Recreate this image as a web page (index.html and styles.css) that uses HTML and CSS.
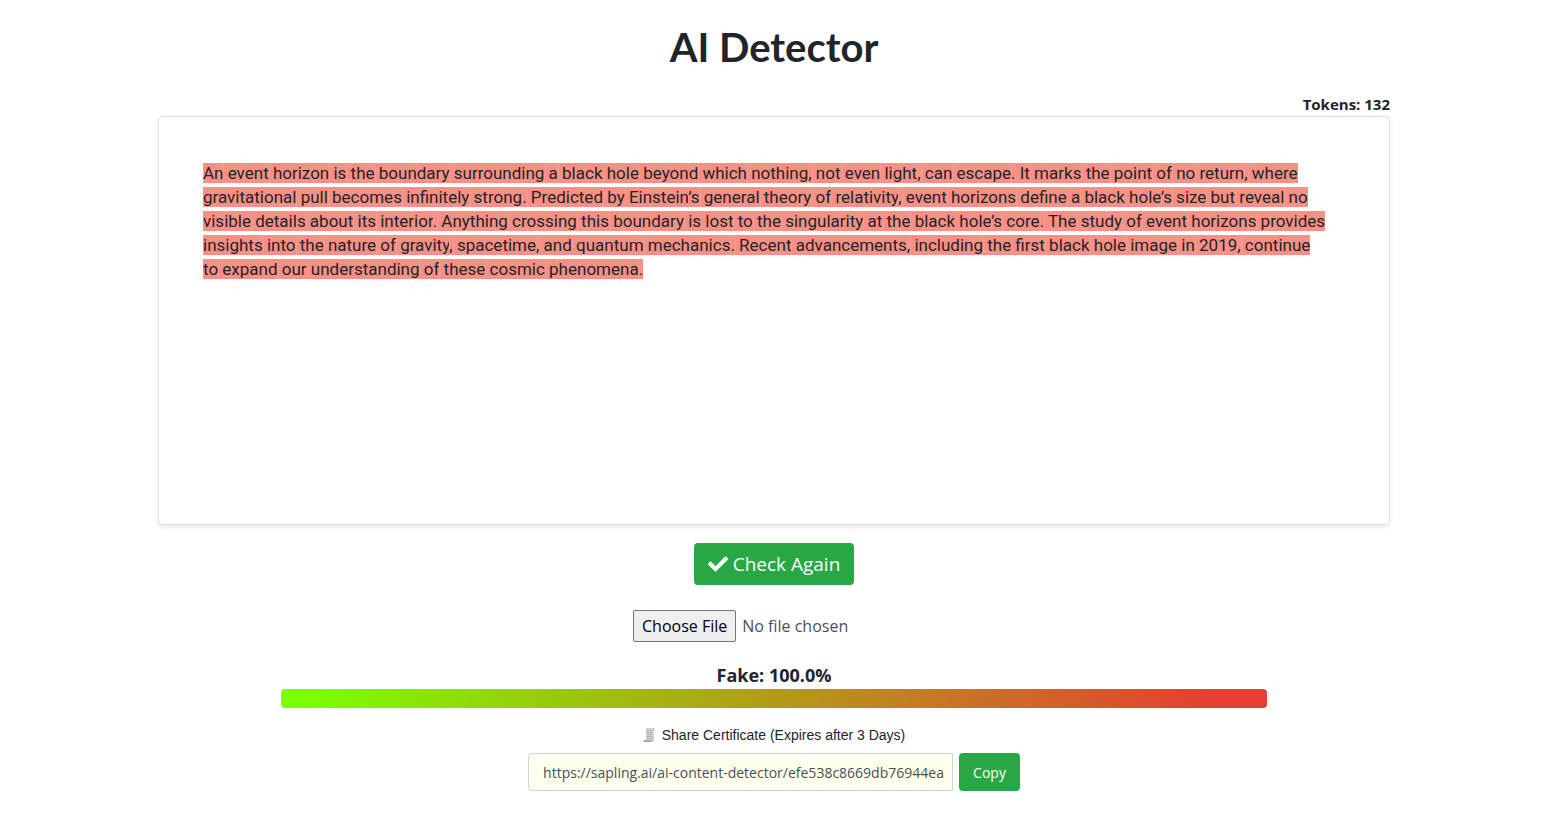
FILE: index.html
```html
<!DOCTYPE html>
<html lang="en">
<head>
    <meta charset="UTF-8">
    <meta name="viewport" content="width=device-width, initial-scale=1.0">
    <title>AI Detector</title>
    <link rel="stylesheet" href="styles.css">
</head>
<body>

<main class="container">
    <h1>AI Detector</h1>

    <div class="tokens">Tokens: 132</div>
    <div class="editor" id="editor">An event horizon is the boundary surrounding a black hole beyond which nothing, not even light, can escape. It marks the point of no return, where gravitational pull becomes infinitely strong. Predicted by Einstein’s general theory of relativity, event horizons define a black hole’s size but reveal no visible details about its interior. Anything crossing this boundary is lost to the singularity at the black hole’s core. The study of event horizons provides insights into the nature of gravity, spacetime, and quantum mechanics. Recent advancements, including the first black hole image in 2019, continue to expand our understanding of these cosmic phenomena.</div>

    <button type="button" class="btn btn-check">
        <svg class="icon-check" viewBox="0 0 512 512" aria-hidden="true"><path fill="currentColor" d="M173.898 439.404l-166.4-166.4c-9.997-9.997-9.997-26.206 0-36.204l36.203-36.204c9.997-9.998 26.207-9.998 36.204 0L192 312.69 432.095 72.596c9.997-9.997 26.207-9.997 36.204 0l36.203 36.204c9.997 9.997 9.997 26.206 0 36.204l-294.4 294.401c-9.998 9.997-26.207 9.997-36.204-.001z"/></svg>
        Check Again
    </button>

    <input type="file" class="file-input" aria-label="Upload a file">

    <div class="score">Fake: 100.0%</div>
    <div class="score-bar"></div>

    <label class="share-label" for="share-url">
        <svg class="icon-receipt" viewBox="0 0 12 14" aria-hidden="true">
            <path fill="#d0d2d4" d="M3 0h9v1l-1 1v11l-1 1H2l1-2z"/>
            <path fill="#b3a5a5" d="M0 12h8l1 2H1z"/>
            <path stroke="#a4a8ab" stroke-dasharray="2 1" d="M4 2.500h5M4 4.500h5M4 6.500h5M4 8.500h5M4 10.500h5"/>
        </svg>
        Share Certificate (Expires after 3 Days)
    </label>
    <div class="share-row">
        <input type="text" class="share-url" id="share-url" value="https://sapling.ai/ai-content-detector/efe538c8669db76944ea" readonly>
        <button type="button" class="btn btn-copy" onclick="copyUrl()">Copy</button>
    </div>
</main>

<script>
    // Wrap every token so it can be highlighted on its own
    function highlightTokens() {
        const editor = document.getElementById('editor');
        const tokens = editor.textContent.match(/\s?[^\s,.’]+|[,.]|’s/g);

        editor.textContent = '';
        tokens.forEach(token => {
            const span = document.createElement('span');
            span.classList.add('token');
            span.textContent = token;
            editor.appendChild(span);
        });
    }

    function copyUrl() {
        document.getElementById('share-url').select();
        document.execCommand('copy');
    }

    highlightTokens();
</script>

</body>
</html>
```
FILE: styles.css
```css
* {
    box-sizing: border-box;
}

body {
    margin: 0;
    padding: 0 24px 24px 4px;
    font-family: "Segoe UI", "Open Sans", "Noto Sans", sans-serif;
    font-size: 16px;
    line-height: 24px;
    color: #212529;
    background-color: #fff;
}

.container {
    display: flex;
    flex-direction: column;
    align-items: center;
    width: 80%;
    margin: 0 auto;
}

h1 {
    margin: 24px 0;
    font-family: Lato, sans-serif;
    font-size: 40px;
    line-height: 46px;
    font-weight: 700;
}

.tokens {
    align-self: flex-end;
    padding-bottom: 2px;
    font-size: 15px;
    line-height: 20px;
    font-weight: 700;
}

.editor {
    width: 100%;
    min-height: 409px;
    padding: 44px 62px 44px 44px;
    border: 1px solid #dfdfdf;
    border-radius: 4px;
    box-shadow: 0 2px 4px rgba(0, 0, 0, 0.1);
    font-family: Roboto, sans-serif;
    font-size: 17px;
}

.token {
    background-color: #fa8f86;
    box-shadow: inset 1px 0 rgba(255, 255, 255, 0.12);
}

.btn {
    border: none;
    border-radius: 4px;
    background-color: #28a745;
    color: #fff;
    font-family: inherit;
    cursor: pointer;
}

.btn:hover {
    background-color: #218838;
}

.btn-check {
    display: flex;
    align-items: center;
    gap: 5px;
    height: 42px;
    margin-top: 18px;
    padding: 0 14px;
    font-size: 19px;
}

.icon-check {
    width: 20px;
    height: 20px;
}

.file-input {
    width: 282px;
    margin-top: 25px;
    font-family: inherit;
    font-size: 16px;
    color: #495057;
}

.file-input::file-selector-button {
    height: 32px;
    margin-right: 6px;
    padding: 0 8px;
    border: 1px solid #767676;
    border-radius: 2px;
    background-color: #efefef;
    color: #000;
    font-family: inherit;
    font-size: 16px;
}

.score {
    margin: 21px 0 2px;
    font-size: 18px;
    font-weight: 700;
}

.score-bar {
    width: 80%;
    height: 19px;
    border-radius: 4px;
    background: linear-gradient(to right, #7cff00 2%, #e53e32 95%);
}

.share-label {
    display: flex;
    align-items: center;
    gap: 7px;
    margin-top: 15px;
    font-family: "Liberation Sans", Arial, sans-serif;
    font-size: 14px;
}

.icon-receipt {
    width: 12px;
    height: 14px;
}

.share-row {
    display: flex;
    gap: 6px;
    margin-top: 6px;
}

.share-url {
    width: 425px;
    height: 38px;
    padding: 0 8px 0 14px;
    border: 1px solid #ced4da;
    border-radius: 4px 0 0 4px;
    background-color: #ffffed;
    color: #495057;
    font-family: inherit;
    font-size: 14px;
}

.btn-copy {
    padding: 0 14px;
    font-size: 14px;
}
```
